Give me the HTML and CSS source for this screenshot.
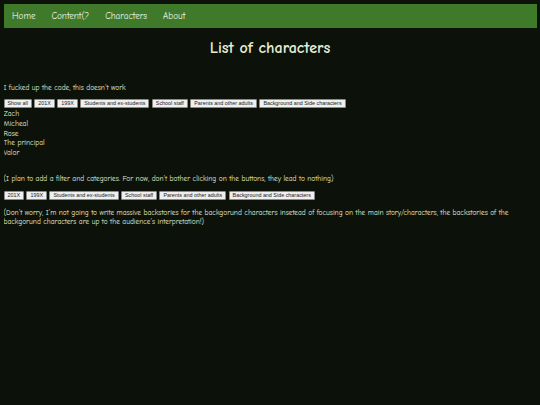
FILE: index.html
```html
<!DOCTYPE html>
<html lang="en">
<head>
<meta charset="utf-8">
<title>List of characters</title>
<link rel="stylesheet" href="styles.css">
</head>
<body>
<nav class="topnav">
  <a href="#">Home</a>
  <a href="#">Content(?</a>
  <a href="#">Characters</a>
  <a href="#">About</a>
</nav>
<h1 class="title">List of characters</h1>
<p class="note first">I fucked up the code, this doesn't work</p>
<div class="btns">
  <button>Show all</button>
  <button>201X</button>
  <button>199X</button>
  <button>Students and ex-students</button>
  <button>School staff</button>
  <button>Parents and other adults</button>
  <button>Background and Side characters</button>
</div>
<ul class="names">
  <li>Zach</li>
  <li>Micheal</li>
  <li>Rose</li>
  <li>The principal</li>
  <li>Valor</li>
</ul>
<p class="note plan">(I plan to add a filter and categories. For now, don't bother clicking on the buttons, they lead to nothing)</p>
<div class="btns second">
  <button>201X</button>
  <button>199X</button>
  <button>Students and ex-students</button>
  <button>School staff</button>
  <button>Parents and other adults</button>
  <button>Background and Side characters</button>
</div>
<p class="note worry">(Don't worry, I'm not going to write massive backstories for the backgorund characters insetead of focusing on the main story/characters, the backstories of the backgorund characters are up to the audience's interpretation!)</p>
</body>
</html>
```

FILE: styles.css
```css
html, body {
  background: #0c1209;
}
body {
  margin: 3.5px;
  color: #e6eed6;
  font-family: "Comic Sans MS", "Comic Neue", cursive;
  font-size: 7.4px;
}
.topnav {
  background: #3f7a2a;
  height: 24.5px;
  display: flex;
  align-items: center;
  padding-left: 8.5px;
  gap: 16px;
}
.topnav a {
  color: #eef3e4;
  text-decoration: none;
  font-size: 9.1px;
}
.title {
  text-align: center;
  font-size: 16px;
  font-weight: bold;
  margin: 12px 0 0;
  line-height: 17px;
}
.note {
  margin: 0;
  line-height: 10px;
}
.first {
  margin-top: 26px;
}
.btns {
  margin-top: 6px;
  display: flex;
  gap: 2.4px;
}
.btns button {
  font-family: "Liberation Sans", Arial, sans-serif;
  font-size: 5.4px;
  background: #efefef;
  color: #222;
  border: 1px solid #8a8a8a;
  border-radius: 1px;
  padding: 0 3px;
  height: 9px;
  line-height: 7px;
  white-space: nowrap;
}
.names {
  list-style: none;
  margin: 1px 0 0;
  padding: 0;
}
.names li {
  line-height: 9.8px;
}
.plan {
  margin-top: 16px;
}
.second {
  margin-top: 7px;
}
.worry {
  margin-top: 8px;
  line-height: 9.5px;
}
```
